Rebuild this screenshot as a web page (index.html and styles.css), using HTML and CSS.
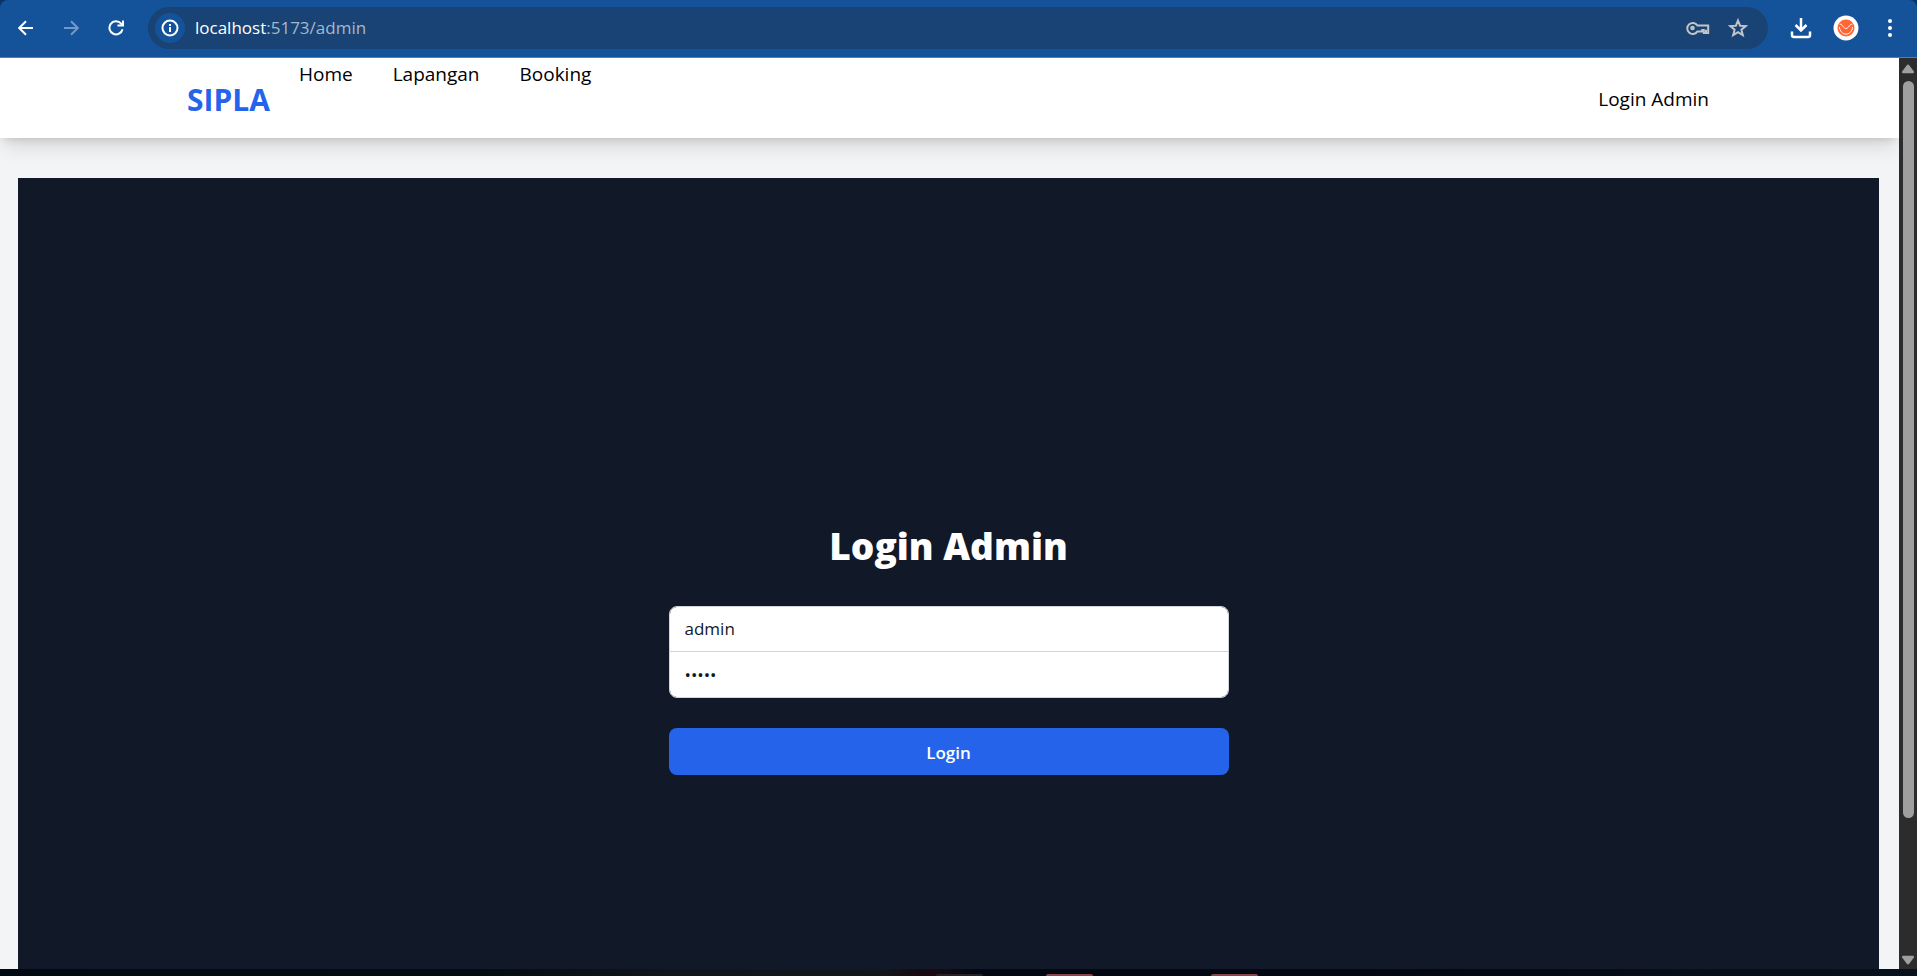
FILE: index.html
```html
<!DOCTYPE html>
<html lang="id">
<head>
<meta charset="utf-8">
<title>SIPLA</title>
<link rel="stylesheet" href="styles.css">
</head>
<body>
<div class="browser">
  <header class="toolbar">
    <button class="tool" aria-label="Back"><svg width="16" height="16" viewBox="0 0 16 16"><path d="M15 8H2M8 1.200 1.200 8 8 14.800"/></svg></button>
    <button class="tool tool-off" aria-label="Forward"><svg width="16" height="16" viewBox="0 0 16 16"><path d="M1 8h13M8 1.200 14.800 8 8 14.800"/></svg></button>
    <button class="tool tool-reload" aria-label="Reload"><svg width="16" height="16" viewBox="0 0 16 16"><path d="M14.500 9.200A6.600 6.600 0 1 1 13 3.400L14.500 5M15 .5V5.500H9.500"/></svg></button>
    <div class="address">
      <button class="site-info" aria-label="Site information"><svg width="18" height="18" viewBox="0 0 18 18"><circle cx="9" cy="9" r="7.500"/><path d="M9 8v5M9 5v2"/></svg></button>
      <div class="url" role="textbox" aria-label="Address"><span class="host">localhost</span>:5173/admin</div>
      <button class="tool tool-soft" aria-label="Passwords"><svg width="24" height="16" viewBox="0 0 24 16"><path d="M11.400 5.500H22.200V13h-4.400v-3h-1.600v1.600h-4.900A5.500 5.500 0 1 1 11.400 5.500ZM20 12.500V9.800"/><circle cx="6.500" cy="8" r="1.300"/></svg></button>
      <button class="tool tool-soft" aria-label="Bookmark"><svg width="20" height="20" viewBox="0 0 20 20"><path d="m10 2.500 2.100 5.200 5.600.4-4.300 3.600 1.400 5.500-4.800-3-4.800 3 1.400-5.500-4.300-3.600 5.600-.4Z"/></svg></button>
    </div>
    <button class="tool tool-download" aria-label="Downloads"><svg width="22" height="22" viewBox="0 0 22 22"><path d="M11 1v12M5.500 8 11 13.500 16.500 8M2 14.500v3.500q0 2 2 2h14q2 0 2-2v-3.500"/></svg></button>
    <button class="tool tool-profile" aria-label="Profile"><svg width="26" height="26" viewBox="0 0 26 26"><circle class="disc" cx="13" cy="13" r="12.500"/><circle class="face" cx="13" cy="13" r="8.500"/><path class="smile" d="M6.700 9.300C9 8.500 10.500 13.500 13 13.500S17 8.500 19.300 9.300M6.400 12c1 9.500 12.200 9.500 13.200 0"/></svg></button>
    <button class="tool tool-menu" aria-label="Menu"><svg width="6" height="20" viewBox="0 0 6 20"><circle cx="3" cy="3" r="2"/><circle cx="3" cy="10" r="2"/><circle cx="3" cy="17" r="2"/></svg></button>
  </header>
  <div class="viewport">
    <div class="page">
      <nav class="nav">
        <a class="brand" href="#">SIPLA</a>
        <div class="links">
          <a href="#">Home</a>
          <a href="#">Lapangan</a>
          <a href="#">Booking</a>
        </div>
        <a class="nav-login" href="#">Login Admin</a>
      </nav>
      <main class="panel">
        <form class="login">
          <h1>Login Admin</h1>
          <div class="fields">
            <input type="text" value="admin" aria-label="Username">
            <input type="password" value="admin" aria-label="Password">
          </div>
          <button class="submit" type="button">Login</button>
        </form>
      </main>
    </div>
    <div class="scrollbar" aria-hidden="true">
      <svg width="14" height="10" viewBox="0 0 14 10"><path d="M5.800 1.200q1.200-1.600 2.400 0l4.500 6q1 2-1 2H2.300q-2 0-1-2Z"/></svg>
      <div class="track"><div class="thumb"></div></div>
      <svg width="14" height="10" viewBox="0 0 14 10"><path d="M5.800 8.800q1.200 1.600 2.400 0l4.500-6q1-2-1-2H2.300q-2 0-1 2Z"/></svg>
    </div>
  </div>
  <footer class="desktop">
    <span class="tab tab-dim"></span>
    <span class="tab"></span>
    <span class="tab tab-far"></span>
  </footer>
</div>
</body>
</html>
```

FILE: styles.css
```css
* { box-sizing: border-box; }
body {
  margin: 0;
  font-family: "Open Sans", "Noto Sans", sans-serif;
  font-size: 19px;
  color: #000;
  background: #0b3263;
}
a { color: inherit; text-decoration: none; }
button { border: 0; padding: 0; background: none; font: inherit; color: inherit; }
svg { display: block; }

.browser { display: flex; flex-direction: column; height: 100vh; overflow: hidden; }

.toolbar {
  display: flex;
  flex: none;
  align-items: center;
  height: 58px;
  padding: 0 24px 2px 18px;
  background: #14539a;
  border-bottom: 1px solid #4a80c0;
  border-radius: 8px 8px 0 0;
}
.tool { flex: none; margin-right: 29px; color: #fff; }
.tool svg, .site-info svg { fill: none; stroke: currentColor; stroke-width: 2; }
.tool-off { color: #7299c6; }
.toolbar .tool-reload { margin-right: 24px; }
.address {
  display: flex;
  flex: 1;
  align-items: center;
  height: 42px;
  margin-right: 22px;
  padding: 0 20px 0 7px;
  border-radius: 21px;
  background: #194374;
}
.site-info {
  display: grid;
  place-items: center;
  width: 30px;
  height: 30px;
  border-radius: 50%;
  background: #14539a;
  color: #fff;
}
.url { flex: 1; padding-left: 10px; font-size: 17px; color: #a6b7cb; }
.host { color: #fff; }
.address .tool-soft { margin-right: 18px; color: #c2c4c8; }
.address .tool-soft:last-child { margin-right: 0; }
.toolbar .tool-download { margin-right: 21px; }
.toolbar .tool-profile { margin-right: 28px; }
.toolbar .tool-menu { margin-right: 0; }
.tool-download svg { stroke-width: 2.5; }
.tool-menu svg { fill: #fff; stroke: none; }
.tool-profile .disc { fill: #fff; stroke: none; }
.tool-profile .face { fill: #ff6535; stroke: none; }
.tool-profile .smile { stroke: #fff; stroke-width: 1; }

.viewport { display: flex; flex: 1; min-height: 0; }
.page { flex: 1; overflow: hidden; background: #f3f4f6; }
.nav {
  position: relative;
  display: flex;
  align-items: center;
  height: 80px;
  padding: 0 10%;
  background: #fff;
  box-shadow: 0 12px 20px -4px rgba(0, 0, 0, .12), 0 5px 8px -4px rgba(0, 0, 0, .14);
}
.nav { padding: 2px 190px 0 187px; }
.brand { font-size: 30px; font-weight: 700; color: #2563eb; }
.links { display: flex; flex: 1; gap: 40px; align-self: stretch; margin-left: 29px; line-height: 28px; }
.panel {
  display: grid;
  place-items: center;
  height: 934px;
  margin: 40px 20px 0 18px;
  background: #111827;
}
.login { display: flex; flex-direction: column; width: 560px; max-width: 100%; }
.login h1 { margin: 0 0 30px; font-size: 37px; line-height: 60px; font-weight: 800; text-align: center; color: #fff; }
.fields { border: 1px solid #d1d5db; border-radius: 8px; overflow: hidden; }
.fields input {
  display: block;
  width: 100%;
  height: 44px;
  padding: 0 15px;
  border: 0;
  outline: 0;
  background: #fff;
  color: #111827;
  font: 17px/24px "Open Sans", "Noto Sans", sans-serif;
}
.fields input + input { height: 46px; border-top: 1px solid #d1d5db; }
.submit {
  height: 47px;
  margin-top: 30px;
  padding-top: 2px;
  border-radius: 8px;
  background: #2563eb;
  color: #fff;
  font-size: 17px;
  font-weight: 600;
}

.scrollbar {
  display: flex;
  flex-direction: column;
  align-items: center;
  width: 18px;
  padding: 6px 0 4px;
  background: #2c2c2c;
}
.scrollbar svg { flex: none; fill: #9f9f9f; }
.track { flex: 1; width: 11px; padding: 7px 0; }
.thumb { height: 85%; border-radius: 6px; background: #9f9f9f; }

.desktop {
  display: flex;
  flex: none;
  align-items: flex-end;
  gap: 63px;
  height: 7px;
  padding-left: 936px;
  background: linear-gradient(90deg, #010a10, #030c12 25%, #10161b 35%, #12171b 46%, #1a0911 48%, #1a0911 49%, #020711 51%, #020711 70%, #08121c);
}
.tab { width: 47px; height: 2px; border-radius: 2px 2px 0 0; background: #8b4449; }
.tab-dim { background: #222228; }
.tab-far { margin-left: 55px; }
```
